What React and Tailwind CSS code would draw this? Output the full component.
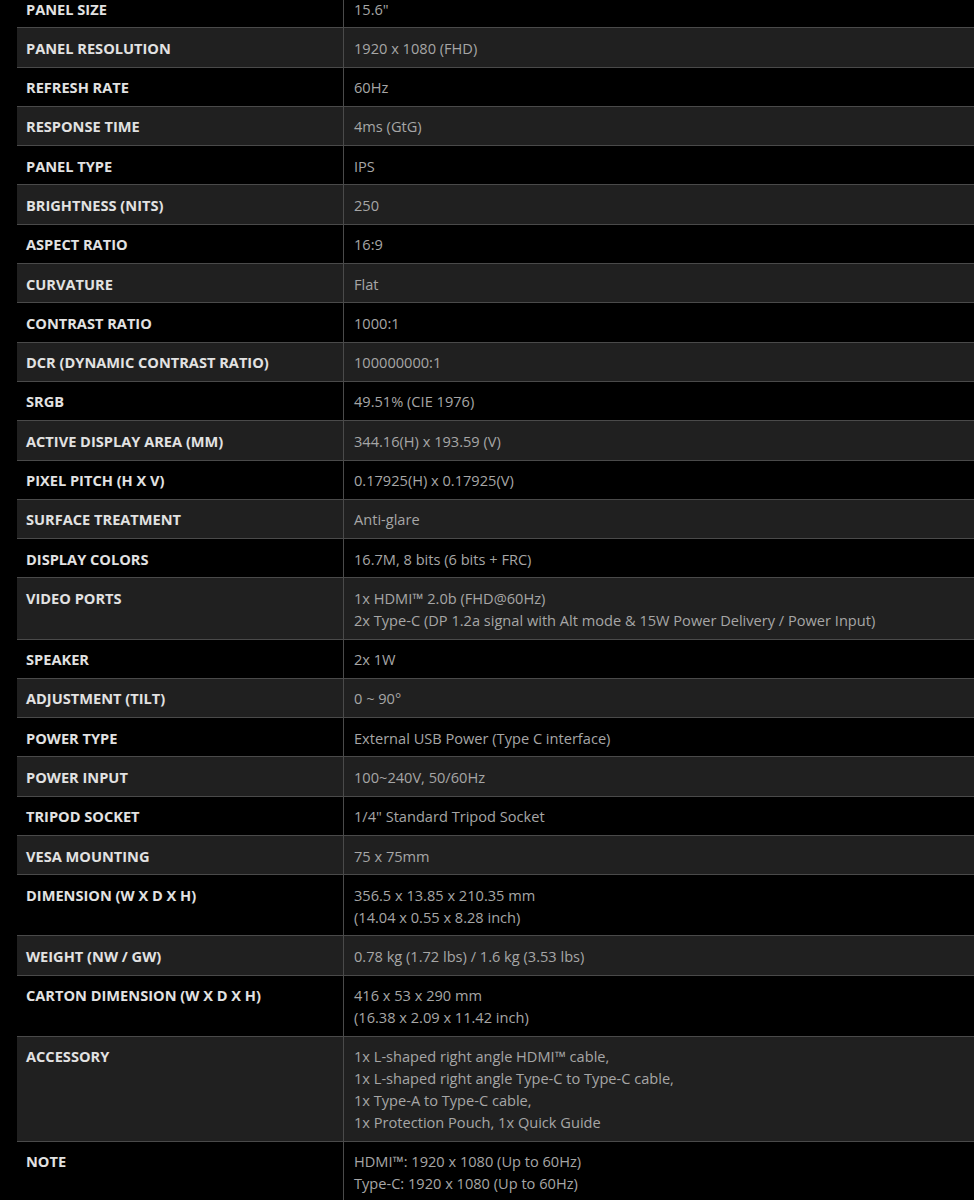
const specs = [
  ['PANEL SIZE', ['15.6"']],
  ['PANEL RESOLUTION', ['1920 x 1080 (FHD)']],
  ['REFRESH RATE', ['60Hz']],
  ['RESPONSE TIME', ['4ms (GtG)']],
  ['PANEL TYPE', ['IPS']],
  ['BRIGHTNESS (NITS)', ['250']],
  ['ASPECT RATIO', ['16:9']],
  ['CURVATURE', ['Flat']],
  ['CONTRAST RATIO', ['1000:1']],
  ['DCR (DYNAMIC CONTRAST RATIO)', ['100000000:1']],
  ['SRGB', ['49.51% (CIE 1976)']],
  ['ACTIVE DISPLAY AREA (MM)', ['344.16(H) x 193.59 (V)']],
  ['PIXEL PITCH (H X V)', ['0.17925(H) x 0.17925(V)']],
  ['SURFACE TREATMENT', ['Anti-glare']],
  ['DISPLAY COLORS', ['16.7M, 8 bits (6 bits + FRC)']],
  ['VIDEO PORTS', ['1x HDMI™ 2.0b (FHD@60Hz)', '2x Type-C (DP 1.2a signal with Alt mode & 15W Power Delivery / Power Input)']],
  ['SPEAKER', ['2x 1W']],
  ['ADJUSTMENT (TILT)', ['0 ~ 90°']],
  ['POWER TYPE', ['External USB Power (Type C interface)']],
  ['POWER INPUT', ['100~240V, 50/60Hz']],
  ['TRIPOD SOCKET', ['1/4" Standard Tripod Socket']],
  ['VESA MOUNTING', ['75 x 75mm']],
  ['DIMENSION (W X D X H)', ['356.5 x 13.85 x 210.35 mm', '(14.04 x 0.55 x 8.28 inch)']],
  ['WEIGHT (NW / GW)', ['0.78 kg (1.72 lbs) / 1.6 kg (3.53 lbs)']],
  ['CARTON DIMENSION (W X D X H)', ['416 x 53 x 290 mm', '(16.38 x 2.09 x 11.42 inch)']],
  ['ACCESSORY', ['1x L-shaped right angle HDMI™ cable,', '1x L-shaped right angle Type-C to Type-C cable,', '1x Type-A to Type-C cable,', '1x Protection Pouch, 1x Quick Guide']],
  ['NOTE', ['HDMI™: 1920 x 1080 (Up to 60Hz)', 'Type-C: 1920 x 1080 (Up to 60Hz)']],
];

export default function App() {
  return (
    <div className="min-h-[1200px] bg-black overflow-hidden pl-[17px] font-['Open_Sans',sans-serif]">
      <div className="-mt-[11px]">
        {specs.map(([label, lines], i) => (
          <div
            key={label}
            className={`flex border-b border-[#4a4a4a] ${i % 2 ? 'bg-[#202020]' : 'bg-black'}`}
          >
            <div className="w-[327px] shrink-0 border-r border-[#4a4a4a] px-[9px] pt-[9.5px] pb-[7px] text-[14.6px] leading-[21.8px] font-bold text-[#e2e2e2]">
              {label}
            </div>
            <div className="flex-1 px-[10px] pt-[9.5px] pb-[7px] text-[14.6px] leading-[21.8px] text-[#a6a6a6]">
              {lines.map((l) => (
                <div key={l}>{l}</div>
              ))}
            </div>
          </div>
        ))}
      </div>
    </div>
  );
}
